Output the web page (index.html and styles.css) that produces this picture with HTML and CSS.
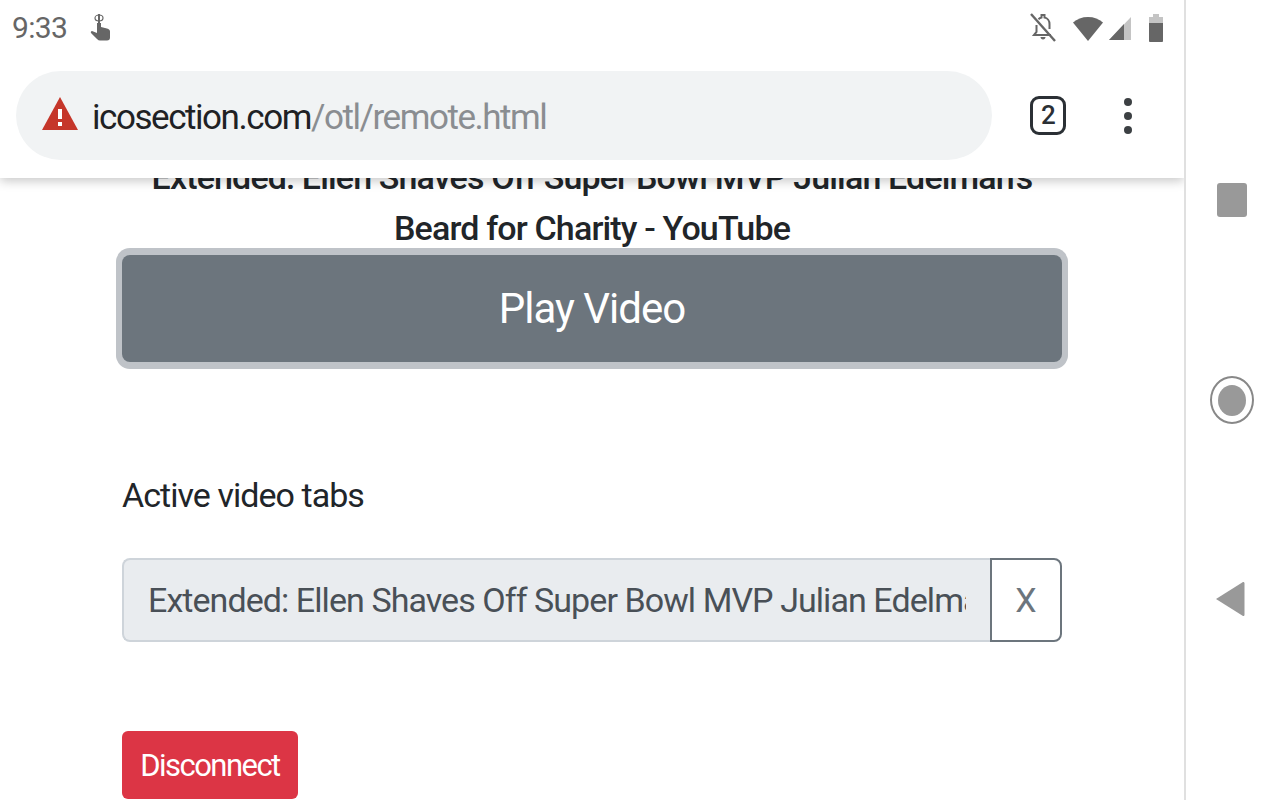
FILE: index.html
```html
<!DOCTYPE html>
<html lang="en">
<head>
    <meta charset="UTF-8">
    <meta name="viewport" content="width=device-width, initial-scale=1.0">
    <title>Remote</title>
    <link rel="stylesheet" href="styles.css">
</head>
<body>
    <div class="phone">
        <div class="screen">
            <div class="chrome">
                <div class="status-bar">
                    <div class="status-left">
                        <span class="clock">9:33</span>
                        <svg class="touch-icon" width="24" height="30" viewBox="0 0 24 30">
                            <ellipse cx="10" cy="5" rx="4" ry="3" fill="none" stroke="#666" stroke-width="1.200"/>
                            <path d="M9 1h2v10H9z" fill="#666"/>
                            <path d="M8 10h4v4l6 1.500c2 .500 3 1.500 3 3v6c0 2-1 3-3 3h-7c-1 0-2-.500-3-1.500L2 20c-.500-1 0-2 1-2l5 2z" fill="#666"/>
                        </svg>
                    </div>
                    <div class="status-right">
                        <svg width="28" height="32" viewBox="0 0 28 32">
                            <path d="M7.500 13v7L5 23h17M20.500 17v-5c0-3-2-6-5-6.500V3h-3v2.500c-1 .300-2 .800-3 1.800" fill="none" stroke="#666" stroke-width="2"/>
                            <path d="M11.500 25h5c0 1.500-1 2.500-2.500 2.500s-2.500-1-2.500-2.500z" fill="#666"/>
                            <path d="M2 2l24 27" stroke="#666" stroke-width="2.400"/>
                        </svg>
                        <svg class="wifi" width="32" height="28" viewBox="0 0 32 28">
                            <path d="M1 8.500C5 5 10 3 16 3s11 2 15 5.500L16 27z" fill="#666"/>
                        </svg>
                        <svg class="signal" width="24" height="28" viewBox="0 0 24 28">
                            <path d="M1 26L23 3v23z" fill="#c4c4c4"/>
                            <path d="M1 26l15-16v16z" fill="#666"/>
                        </svg>
                        <svg class="battery" width="16" height="30" viewBox="0 0 16 30">
                            <path d="M5 1h6v3h4v6H1V4h4z" fill="#c4c4c4"/>
                            <path d="M1 10h14v18c0 .500-.500 1-1 1H2c-.500 0-1-.500-1-1z" fill="#666"/>
                        </svg>
                    </div>
                </div>
                <div class="toolbar">
                    <div class="omnibox">
                        <svg class="warn-icon" width="36" height="34" viewBox="0 0 36 34">
                            <path d="M18 0l18 33H0z" fill="#c5362a"/>
                            <path d="M16 12h4v10h-4zM16 25h4v4h-4z" fill="#fff"/>
                        </svg>
                        <span class="url">icosection.com<span class="url-path">/otl/remote.html</span></span>
                    </div>
                    <div class="tab-count">2</div>
                    <div class="menu-dots"><i></i><i></i><i></i></div>
                </div>
            </div>

            <div class="page">
                <h5 class="video-title">Extended: Ellen Shaves Off Super Bowl MVP Julian Edelman's Beard for Charity - YouTube</h5>
                <button class="btn-play">Play Video</button>
                <p class="tabs-label">Active video tabs</p>
                <div class="input-group">
                    <input class="tab-input" type="text" readonly value="Extended: Ellen Shaves Off Super Bowl MVP Julian Edelman's Beard for Charity - YouTube">
                    <button class="btn-close">X</button>
                </div>
                <button class="btn-disconnect">Disconnect</button>
            </div>
        </div>

        <div class="nav-rail">
            <div class="nav-square"></div>
            <div class="nav-circle"><div></div></div>
            <svg width="32" height="38" viewBox="0 0 32 38">
                <path d="M29 2c1 0 1.500.500 1.500 1.500v31c0 1-.500 1.500-1.500 1.500L2 19z" fill="#999"/>
            </svg>
        </div>
    </div>
</body>
</html>
```
FILE: styles.css
```css
* {
    box-sizing: border-box;
}
body {
    margin: 0;
    background-color: #fff;
    font-family: Roboto, sans-serif;
    overflow: hidden;
}
.phone {
    display: flex;
    width: 1280px;
    height: 800px;
}
.screen {
    position: relative;
    width: 1184px;
    height: 800px;
    overflow: hidden;
}
.chrome {
    position: absolute;
    top: 0;
    left: 0;
    right: 0;
    height: 178px;
    background-color: #fff;
    box-shadow: 0 3px 10px rgba(0, 0, 0, 0.22);
}
.status-bar {
    display: flex;
    justify-content: space-between;
    align-items: center;
    height: 56px;
    padding: 0 20px 1px 12px;
}
.status-left, .status-right {
    display: flex;
    align-items: center;
}
.clock {
    font-size: 30px;
    color: #666;
    letter-spacing: -0.7px;
}
.touch-icon {
    margin-left: 22px;
}
.wifi {
    margin-left: 15px;
}
.signal {
    margin-left: 4px;
}
.battery {
    margin-left: 16px;
}
.toolbar {
    display: flex;
    align-items: center;
    height: 89px;
    margin-top: 15px;
    padding-left: 16px;
}
.omnibox {
    display: flex;
    align-items: center;
    width: 976px;
    height: 89px;
    padding-left: 26px;
    background-color: #f1f3f4;
    border-radius: 45px;
}
.warn-icon {
    margin-bottom: 4px;
}
.url {
    margin-left: 14px;
    padding-top: 4px;
    font-size: 35px;
    color: #202124;
    letter-spacing: -1.45px;
}
.url-path {
    color: #8a8d91;
}
.tab-count {
    width: 36px;
    height: 39px;
    margin-left: 38px;
    border: 3px solid #2b3035;
    border-radius: 9px;
    font-size: 26px;
    font-weight: 500;
    line-height: 32px;
    letter-spacing: -1px;
    text-align: center;
    color: #2b3035;
}
.menu-dots {
    display: flex;
    flex-direction: column;
    gap: 6px;
    margin-left: 58px;
}
.menu-dots i {
    width: 8px;
    height: 8px;
    border-radius: 50%;
    background-color: #3c4043;
}
.page {
    padding: 152px 122px 0;
    width: 1184px;
}
.video-title {
    margin: 0;
    font-size: 34px;
    font-weight: 500;
    line-height: 51px;
    letter-spacing: -0.85px;
    text-align: center;
    color: #212529;
}
.btn-play {
    display: block;
    width: 940px;
    height: 107px;
    margin-top: 1px;
    background-color: #6c757d;
    border: none;
    border-radius: 8px;
    box-shadow: 0 1px 0 6px #bfc3c8, 0 -1px 0 6px #bfc3c8;
    font-family: inherit;
    font-size: 42px;
    letter-spacing: -1px;
    color: #fff;
}
.tabs-label {
    margin: 108px 0 0;
    font-size: 34px;
    line-height: 50px;
    letter-spacing: -0.95px;
    color: #212529;
}
.input-group {
    display: flex;
    width: 940px;
    height: 84px;
    margin-top: 38px;
}
.tab-input {
    width: 868px;
    padding: 0 24px;
    background-color: #e9ecef;
    border: 2px solid #ced4da;
    border-right: none;
    border-radius: 8px 0 0 8px;
    font-family: inherit;
    font-size: 34px;
    letter-spacing: -0.93px;
    color: #495057;
    outline: none;
}
.btn-close {
    width: 72px;
    background-color: #fff;
    border: 2px solid #6c757d;
    border-radius: 0 8px 8px 0;
    font-family: inherit;
    font-size: 34px;
    color: #6c757d;
}
.btn-disconnect {
    display: block;
    width: 176px;
    height: 68px;
    margin-top: 89px;
    background-color: #dc3545;
    border: none;
    border-radius: 6px;
    font-family: inherit;
    font-size: 31px;
    letter-spacing: -1.55px;
    color: #fff;
}
.nav-rail {
    display: flex;
    flex-direction: column;
    align-items: center;
    width: 96px;
    height: 800px;
    padding: 183px 2px 0 0;
    border-left: 2px solid #e0e0e0;
}
.nav-square {
    width: 30px;
    height: 34px;
    background-color: #999;
    border-radius: 3px;
}
.nav-circle {
    display: flex;
    align-items: center;
    justify-content: center;
    width: 44px;
    height: 48px;
    margin-top: 159px;
    border: 2px solid #888;
    border-radius: 50%;
}
.nav-circle div {
    width: 28px;
    height: 31px;
    background-color: #999;
    border-radius: 50%;
}
.nav-rail svg {
    margin: 156px 4px 0 0;
}
```
